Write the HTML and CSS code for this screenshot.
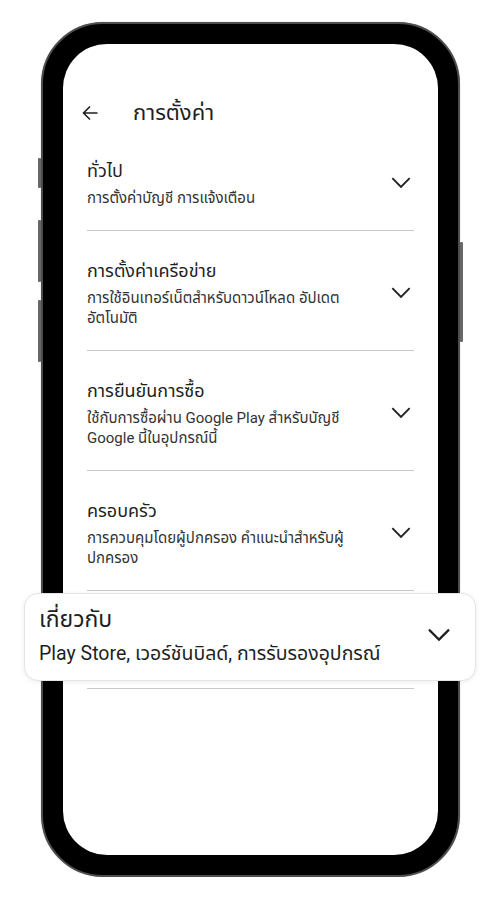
FILE: index.html
```html
<!DOCTYPE html>
<html lang="th">
<head>
  <meta charset="UTF-8">
  <title>การตั้งค่า</title>
  <link rel="stylesheet" href="styles.css">
</head>
<body>

<div class="phone">
  <!-- hardware buttons -->
  <span class="hw hw-left hw-1"></span>
  <span class="hw hw-left hw-2"></span>
  <span class="hw hw-left hw-3"></span>
  <span class="hw hw-right hw-4"></span>

  <div class="screen">

    <!-- Top app bar -->
    <div class="topbar">
      <svg class="back" width="16" height="16" viewBox="0 0 16 16">
        <path d="M15.5 8H1.5M8 1.5L1.5 8L8 14.5" fill="none" stroke="#1f1f1f" stroke-width="1.6" stroke-linejoin="miter"/>
      </svg>
      <h1>การตั้งค่า</h1>
    </div>

    <!-- Settings list -->
    <ul class="settings">
      <li class="item">
        <div class="text">
          <div class="title">ทั่วไป</div>
          <div class="sub">การตั้งค่าบัญชี การแจ้งเตือน</div>
        </div>
        <svg class="chev" viewBox="0 0 24 24"><path d="M4 8.5L12 16.5L20 8.5"/></svg>
      </li>
      <li class="item">
        <div class="text">
          <div class="title">การตั้งค่าเครือข่าย</div>
          <div class="sub">การใช้อินเทอร์เน็ตสำหรับดาวน์โหลด อัปเดต<br>อัตโนมัติ</div>
        </div>
        <svg class="chev" viewBox="0 0 24 24"><path d="M4 8.5L12 16.5L20 8.5"/></svg>
      </li>
      <li class="item">
        <div class="text">
          <div class="title">การยืนยันการซื้อ</div>
          <div class="sub">ใช้กับการซื้อผ่าน Google Play สำหรับบัญชี<br>Google นี้ในอุปกรณ์นี้</div>
        </div>
        <svg class="chev" viewBox="0 0 24 24"><path d="M4 8.5L12 16.5L20 8.5"/></svg>
      </li>
      <li class="item">
        <div class="text">
          <div class="title">ครอบครัว</div>
          <div class="sub">การควบคุมโดยผู้ปกครอง คำแนะนำสำหรับผู้<br>ปกครอง</div>
        </div>
        <svg class="chev" viewBox="0 0 24 24"><path d="M4 8.5L12 16.5L20 8.5"/></svg>
      </li>
      <!-- highlighted item, popped out -->
      <li class="item item-focus">
        <div class="card">
          <div class="text">
            <div class="title">เกี่ยวกับ</div>
            <div class="sub">Play Store, เวอร์ชันบิลด์, การรับรองอุปกรณ์</div>
          </div>
          <svg class="chev" viewBox="0 0 24 24"><path d="M4 8.5L12 16.5L20 8.5"/></svg>
        </div>
      </li>
    </ul>

  </div>
</div>

</body>
</html>
```

FILE: styles.css
```css
body {
  margin: 0;
  background: #fff;
  font-family: Roboto, "Noto Sans Thai", "Noto Sans Thai UI", "Noto Sans", sans-serif;
  color: #1f1f1f;
}

/* Phone frame */
.phone {
  position: relative;
  box-sizing: border-box;
  width: 419px;
  height: 855px;
  margin: 22px 0 0 41px;
  padding: 20px;
  background: #000;
  border: 2px solid #4d4d4d;
  border-radius: 62px;
  box-shadow: 0 0 1px #999;
}

.hw {
  position: absolute;
  width: 3px;
  background: #676767;
  border-radius: 1px;
}

.hw-left { left: -5px; }
.hw-right { right: -5px; }

.hw-1 { top: 134px; height: 30px; }
.hw-2 { top: 196px; height: 62px; }
.hw-3 { top: 276px; height: 62px; }
.hw-4 { top: 218px; height: 100px; }

.screen {
  height: 811px;
  background: #fff;
  border-radius: 44px;
}

/* Top bar */
.topbar {
  display: flex;
  align-items: center;
  padding: 57px 0 6px 19px;
}

.topbar .back {
  flex: none;
  margin-right: 35px;
}

.topbar h1 {
  margin: 0;
  font-size: 22px;
  font-weight: 400;
  line-height: 24px;
}

/* Settings list */
.settings {
  list-style-type: none;
  margin: 0;
  padding: 0 24px;
}

.item {
  display: flex;
  align-items: center;
  justify-content: space-between;
  padding: 28px 0 22px;
  border-bottom: 1px solid #c9c9c9;
}

.title {
  font-size: 18px;
  line-height: 24px;
}

.sub {
  margin-top: 5px;
  font-size: 15px;
  line-height: 20px;
  color: #333;
}

.chev {
  flex: none;
  width: 26px;
  height: 26px;
  margin-top: -4px;
}

.chev path {
  fill: none;
  stroke: #1f1f1f;
  stroke-width: 1.7;
}

/* Focused item card */
.item-focus {
  display: block;
  box-sizing: border-box;
  height: 98px;
  padding: 2px 0 0;
}

.card {
  display: flex;
  align-items: center;
  justify-content: space-between;
  height: 88px;
  box-sizing: border-box;
  margin: 0 -62px 0 -63px;
  padding: 0 21px 2px 14px;
  background: #fff;
  border: 1px solid #e4e4e4;
  border-radius: 14px;
  box-shadow: 0 1px 5px rgba(0, 0, 0, 0.08);
}

.card .title {
  font-size: 23px;
  line-height: 28px;
}

.card .sub {
  margin-top: 7px;
  font-size: 19.5px;
  line-height: 26px;
  color: #1f1f1f;
}

.card .chev {
  width: 30px;
  height: 30px;
}
```
